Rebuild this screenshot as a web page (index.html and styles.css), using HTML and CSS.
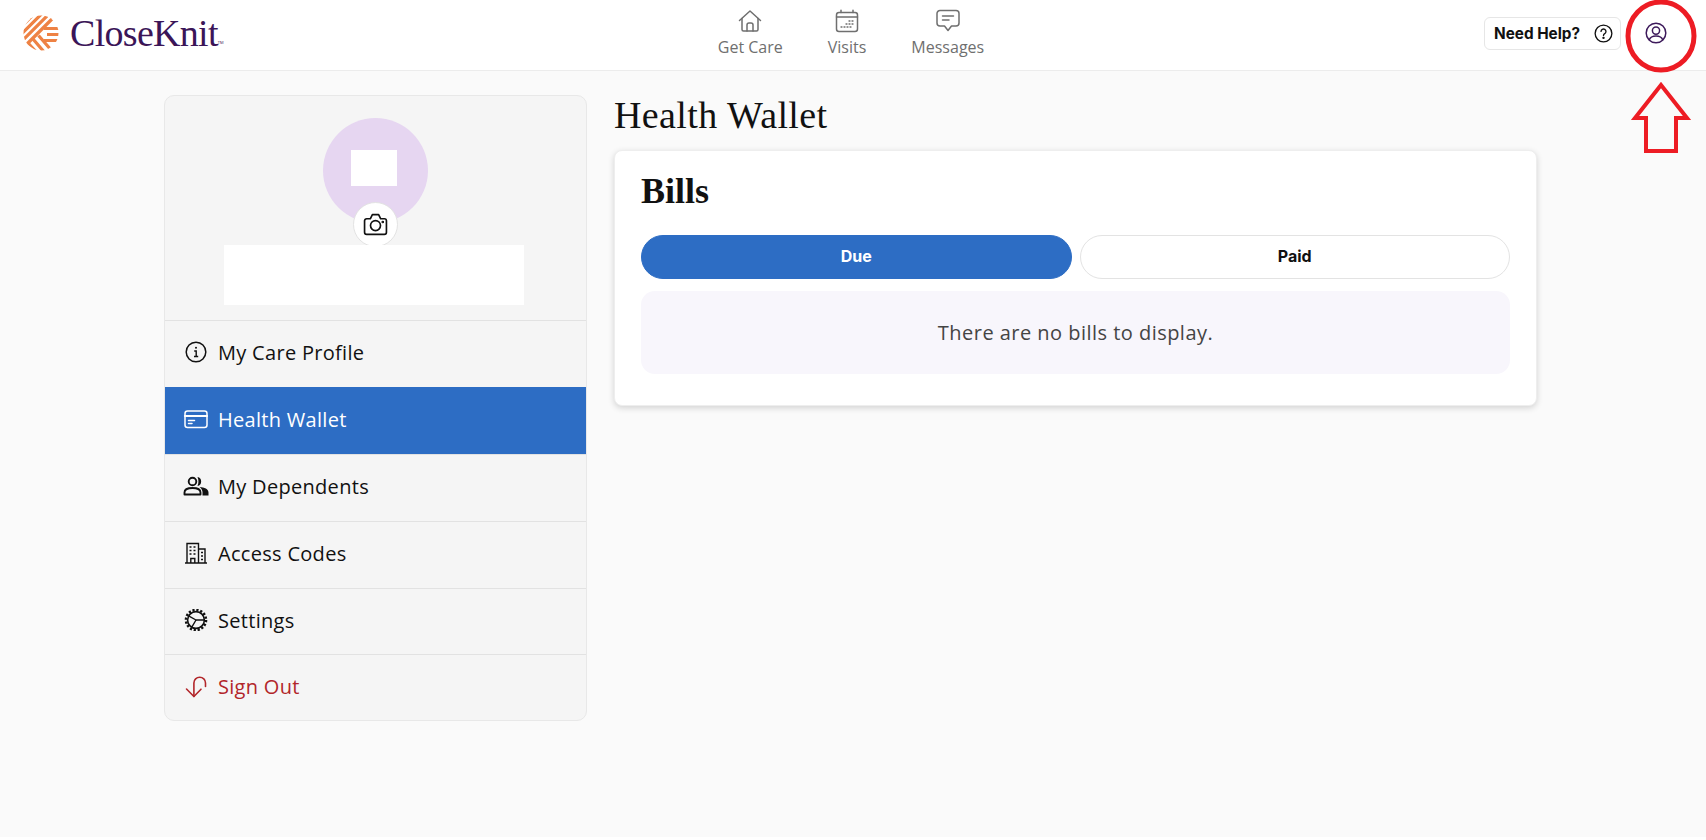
FILE: index.html
```html
<!DOCTYPE html>
<html lang="en">
<head>
    <meta charset="UTF-8">
    <title>CloseKnit - Health Wallet</title>
    <link rel="stylesheet" href="styles.css">
</head>
<body>

    <!-- Header -->
    <header class="topbar">
        <div class="logo">
            <svg class="logo-mark" viewBox="0 0 36 36" width="36" height="36">
                <defs>
                    <clipPath id="ball"><circle cx="18" cy="18" r="17.5"/></clipPath>
                </defs>
                <g clip-path="url(#ball)" stroke="#ee8244" stroke-width="3.2" fill="none">
                    <path d="M-4 14 L14 -4 M-4 21.5 L21.5 -4 M-2 27 L27 -2 M3 30 L31 2"/>
                    <path d="M21 13.5 H38 M24 19.5 H38 M21 25.5 H38"/>
                    <path d="M10 24 L22 38 M15.5 20.5 L29 36 M5 28 L16 40"/>
                </g>
            </svg>
            <span class="logo-text">CloseKnit</span><span class="logo-tm">TM</span>
        </div>

        <nav class="topnav">
            <a class="topnav-item">
                <svg viewBox="0 0 24 24" width="24" height="24" fill="none" stroke="#6f6f6f" stroke-width="1.5" stroke-linejoin="round" stroke-linecap="round">
                    <path d="M1.5 11.5 L12 2 L22.5 11.5"/>
                    <path d="M4 9.5 V20.5 a1.5 1.5 0 0 0 1.5 1.5 H18.5 a1.5 1.5 0 0 0 1.5 -1.5 V9.5"/>
                    <path d="M9 22 V16 a2 2 0 0 1 2 -2 H13 a2 2 0 0 1 2 2 V22"/>
                </svg>
                <span>Get Care</span>
            </a>
            <a class="topnav-item">
                <svg viewBox="0 0 24 24" width="24" height="24" fill="none" stroke="#6f6f6f" stroke-width="1.5" stroke-linecap="round">
                    <rect x="1.5" y="3.5" width="21" height="19" rx="2.5"/>
                    <path d="M1.5 8 H22.5 M6 1.2 V3.5 M18 1.2 V3.5"/>
                    <path d="M14 12 h1 M17 12 h1 M11 15 h1 M14 15 h1 M17 15 h1 M6 18 h1 M9 18 h1 M12 18 h1 M15 18 h1" stroke-width="1.3"/>
                </svg>
                <span>Visits</span>
            </a>
            <a class="topnav-item">
                <svg viewBox="0 0 24 24" width="24" height="24" fill="none" stroke="#6f6f6f" stroke-width="1.5" stroke-linejoin="round" stroke-linecap="round">
                    <path d="M4 1.5 H20 a3 3 0 0 1 3 3 V14 a3 3 0 0 1 -3 3 H15.5 L12 21.5 L8.5 17 H4 a3 3 0 0 1 -3 -3 V4.5 a3 3 0 0 1 3 -3 Z"/>
                    <path d="M6.5 7 H17.5 M6.5 11 H13"/>
                </svg>
                <span>Messages</span>
            </a>
        </nav>

        <div class="topbar-right">
            <button class="help-btn">
                Need Help?
                <svg viewBox="0 0 20 20" width="19" height="19" fill="none" stroke="#111" stroke-width="1.4">
                    <circle cx="10" cy="10" r="8.8"/>
                    <path d="M7.4 7.8 a2.6 2.6 0 1 1 3.9 2.3 c-.9 .5 -1.3 1 -1.3 2" stroke-linecap="round"/>
                    <circle cx="10" cy="14.6" r=".6" fill="#111"/>
                </svg>
            </button>
            <svg class="user-icon" viewBox="0 0 22 22" width="22" height="22" fill="none" stroke="#3d1a5b" stroke-width="1.5">
                <circle cx="11" cy="11" r="9.8"/>
                <circle cx="11" cy="8.6" r="3.6"/>
                <path d="M4.2 18 c1 -3 3.6 -4 6.8 -4 s5.8 1 6.8 4"/>
            </svg>
        </div>
    </header>

    <!-- Isi halaman -->
    <main class="page">
        <aside class="sidebar">
            <div class="profile">
                <div class="avatar">
                    <div class="avatar-blank"></div>
                    <div class="camera">
                        <svg viewBox="0 0 24 24" width="25" height="25" fill="none" stroke="#111" stroke-width="1.6" stroke-linejoin="round">
                            <path d="M3.5 6.5 H7 L9 2.5 H15 L17 6.5 H20.5 a2 2 0 0 1 2 2 V19.5 a2 2 0 0 1 -2 2 H3.5 a2 2 0 0 1 -2 -2 V8.5 a2 2 0 0 1 2 -2 Z"/>
                            <circle cx="12" cy="13" r="4.8"/>
                            <circle cx="19" cy="9.6" r=".5" fill="#111"/>
                        </svg>
                    </div>
                </div>
                <div class="name-blank"></div>
            </div>

            <a class="menu-item">
                <svg viewBox="0 0 22 22" width="22" height="22" fill="none" stroke="currentColor" stroke-width="1.5">
                    <circle cx="11" cy="11" r="9.8"/>
                    <path d="M9.2 10 H11.2 V15.5 M9 15.5 H13.2" stroke-width="1.4"/>
                    <circle cx="11" cy="6.8" r="1" fill="currentColor" stroke="none"/>
                </svg>
                My Care Profile
            </a>
            <a class="menu-item active">
                <svg viewBox="0 0 24 20" width="24" height="20" fill="none" stroke="currentColor" stroke-width="1.5" stroke-linecap="round">
                    <rect x="1" y="2" width="22" height="16.5" rx="2.5"/>
                    <path d="M1 7 H23" stroke-width="2.2"/>
                    <path d="M4.5 11.5 H10.5 M4.5 14.5 H8"/>
                </svg>
                Health Wallet
            </a>
            <a class="menu-item">
                <svg viewBox="0 0 26 20" width="26" height="20" fill="none" stroke="currentColor" stroke-width="1.9">
                    <circle cx="9.5" cy="5.5" r="3.8"/>
                    <path d="M1.5 18.5 V16.5 c0 -3 3 -4.5 8 -4.5 s8 1.5 8 4.5 V18.5 Z" stroke-linejoin="round"/>
                    <path d="M14.5 1 a4.6 4.6 0 0 1 0 9 c1.3 -2.6 1.3 -6.4 0 -9 Z" fill="currentColor" stroke="none"/>
                    <path d="M16.5 11 c5 .3 9 2 9 5.5 V19.5 H19.5 V16 c0 -1.8 -1.3 -3.6 -3 -5 Z" fill="currentColor" stroke="none"/>
                </svg>
                My Dependents
            </a>
            <a class="menu-item">
                <svg viewBox="0 0 24 22" width="24" height="22" fill="none" stroke="currentColor" stroke-width="1.4">
                    <path d="M1 21 H23" stroke-width="1.6"/>
                    <path d="M3 21 V1.5 H14.5 V21 M14.5 7 H21 V21"/>
                    <path d="M6.8 21 V16.5 H10.8 V21"/>
                    <path d="M5.5 5 h2 M9.5 5 h2 M5.5 8.5 h2 M9.5 8.5 h2 M5.5 12 h2 M9.5 12 h2 M17 10.5 h2 M17 14 h2 M17 17.5 h2" stroke-width="1.7"/>
                </svg>
                Access Codes
            </a>
            <a class="menu-item">
                <svg viewBox="0 0 22 22" width="22" height="22" fill="none" stroke="currentColor">
                    <circle cx="11" cy="11" r="10" stroke-width="2.6" stroke-dasharray="2.2 1.73"/>
                    <circle cx="11" cy="11" r="8.4" stroke-width="1.6"/>
                    <path d="M11 11 L3.6 6.8 M11 11 L19.2 11 M11 11 L6.5 18.6" stroke-width="1.4"/>
                </svg>
                Settings
            </a>
            <a class="menu-item signout">
                <svg viewBox="0 0 22 22" width="22" height="22" fill="none" stroke="currentColor" stroke-width="1.6" stroke-linecap="round" stroke-linejoin="round">
                    <path d="M20.5 10.5 V7 a5.8 5.8 0 0 0 -11.6 0 V20.5"/>
                    <path d="M1.5 13 L8.9 20.5 L16 13.2"/>
                </svg>
                Sign Out
            </a>
        </aside>

        <section class="content">
            <h1 class="page-title">Health Wallet</h1>
            <div class="card">
                <h2 class="card-title">Bills</h2>
                <div class="tabs">
                    <button class="tab tab-on">Due</button>
                    <button class="tab">Paid</button>
                </div>
                <div class="empty">There are no bills to display.</div>
            </div>
        </section>
    </main>

    <!-- Coretan merah di atas screenshot -->
    <svg class="markup" viewBox="0 0 80 160" width="80" height="160" fill="none" stroke="#ed1c24">
        <ellipse cx="41" cy="36" rx="33" ry="34" stroke-width="5"/>
        <path d="M41 85 L67 118 H56 V151 H26 V118 H15 Z" stroke-width="4"/>
    </svg>
    <div class="corner-mark"></div>
</body>
</html>
```

FILE: styles.css
```css
html {
    background: #fff;
}
body {
    font-family: 'Open Sans', sans-serif;
    background-color: #fafafa;
    margin: 0;
    height: 837px;
    overflow: hidden;
    position: relative;
    color: #111;
}
.topbar {
    height: 71px;
    box-sizing: border-box;
    background: #fff;
    border-bottom: 1px solid #ececec;
    display: grid;
    grid-template-columns: 1fr auto 1fr;
    align-items: center;
    padding: 0 0 4px 23px;
}
.logo {
    display: flex;
    align-items: center;
    height: 66px;
}
.logo-mark {
    margin-right: 11px;
}
.logo-text {
    font-family: 'Liberation Serif', serif;
    font-size: 38px;
    color: #3b1558;
    letter-spacing: -0.7px;
}
.logo-tm {
    font-size: 4px;
    color: #3b1558;
    margin-top: 18px;
}
.topnav {
    display: flex;
    gap: 45px;
    margin-right: 27px;
}
.topnav-item {
    display: flex;
    flex-direction: column;
    align-items: center;
    gap: 3px;
    font-size: 16px;
    color: #6f6f6f;
}
.topbar-right {
    display: flex;
    justify-content: flex-end;
    align-items: center;
    padding-right: 39px;
    gap: 24px;
}
.help-btn {
    font-family: 'Inter', sans-serif;
    font-weight: 700;
    font-size: 15.3px;
    color: #111;
    background: #fff;
    border: 1px solid #e6e6e6;
    border-radius: 6px;
    width: 137px;
    height: 33px;
    display: flex;
    align-items: center;
    justify-content: space-between;
    padding: 0 7px 0 9px;
}
.page {
    display: flex;
    gap: 27px;
    margin-left: 164px;
    width: 1373px;
    padding-top: 24px;
}
.sidebar {
    width: 423px;
    flex: none;
    background: #f5f5f5;
    border: 1px solid #e8e8e8;
    border-radius: 10px;
    box-sizing: border-box;
    height: 626px;
    overflow: hidden;
}
.profile {
    height: 224px;
    padding-top: 22px;
    box-sizing: border-box;
    display: flex;
    flex-direction: column;
    align-items: center;
    position: relative;
}
.avatar {
    width: 105px;
    height: 105px;
    border-radius: 50%;
    background: #e6d6f1;
    display: flex;
    align-items: flex-start;
    justify-content: center;
    position: relative;
}
.avatar-blank {
    width: 46px;
    height: 36px;
    background: #fff;
    margin-top: 32px;
    margin-right: 3px;
}
.camera {
    position: absolute;
    left: 30px;
    top: 84px;
    width: 45px;
    height: 45px;
    border-radius: 50%;
    background: #fff;
    border: 1px solid #e3e3e3;
    box-sizing: border-box;
    display: flex;
    align-items: center;
    justify-content: center;
}
.name-blank {
    width: 300px;
    height: 60px;
    background: #fff;
    margin-top: 22px;
    margin-right: 3px;
    position: relative;
}
.menu-item {
    height: 66.9px;
    box-sizing: border-box;
    border-top: 1px solid #e2e2e2;
    display: flex;
    align-items: center;
    padding-left: 14px;
    padding-bottom: 3px;
    font-size: 20px;
    letter-spacing: 0.3px;
    color: #111;
}
.menu-item svg {
    width: 34px;
    flex: none;
    margin-right: 5px;
}
.menu-item.active {
    background: #2d6dc4;
    color: #fff;
    border-top-color: #2d6dc4;
}
.menu-item.signout {
    color: #b2262a;
}
.content {
    flex: 1;
}
.page-title {
    font-family: 'Liberation Serif', serif;
    font-weight: 400;
    font-size: 38px;
    line-height: 42px;
    margin: -1px 0 14px 0;
    color: #111;
    letter-spacing: 0.4px;
}
.card {
    background: #fff;
    border: 1px solid #eee;
    border-radius: 8px;
    box-shadow: 0 2px 6px rgba(0,0,0,0.16);
    box-sizing: border-box;
    height: 256px;
    padding: 20px 26px 0 26px;
}
.card-title {
    font-family: 'Liberation Serif', serif;
    font-weight: 700;
    font-size: 36px;
    line-height: 40px;
    margin: 0 0 24px 0;
}
.tabs {
    display: flex;
    gap: 8px;
    margin-bottom: 12px;
}
.tab {
    flex: 1;
    height: 44px;
    border-radius: 22px;
    border: 1px solid #e3e3e3;
    background: #fff;
    font-family: 'Inter', sans-serif;
    font-weight: 700;
    font-size: 16px;
    color: #111;
    padding-bottom: 4px;
}
.tab-on {
    background: #2d6dc4;
    border-color: #2d6dc4;
    color: #fff;
}
.empty {
    background: #f8f6fc;
    border-radius: 14px;
    height: 83px;
    padding-bottom: 1px;
    box-sizing: border-box;
    display: flex;
    align-items: center;
    justify-content: center;
    font-size: 20px;
    letter-spacing: 0.47px;
    color: #444;
}
/* anotasi merah di pojok kanan atas */
.markup {
    position: absolute;
    left: 1620px;
    top: 0;
}
.corner-mark {
    position: absolute;
    left: 1702px;
    top: 837px;
    width: 2px;
    height: 3px;
    background: #333;
}
```
